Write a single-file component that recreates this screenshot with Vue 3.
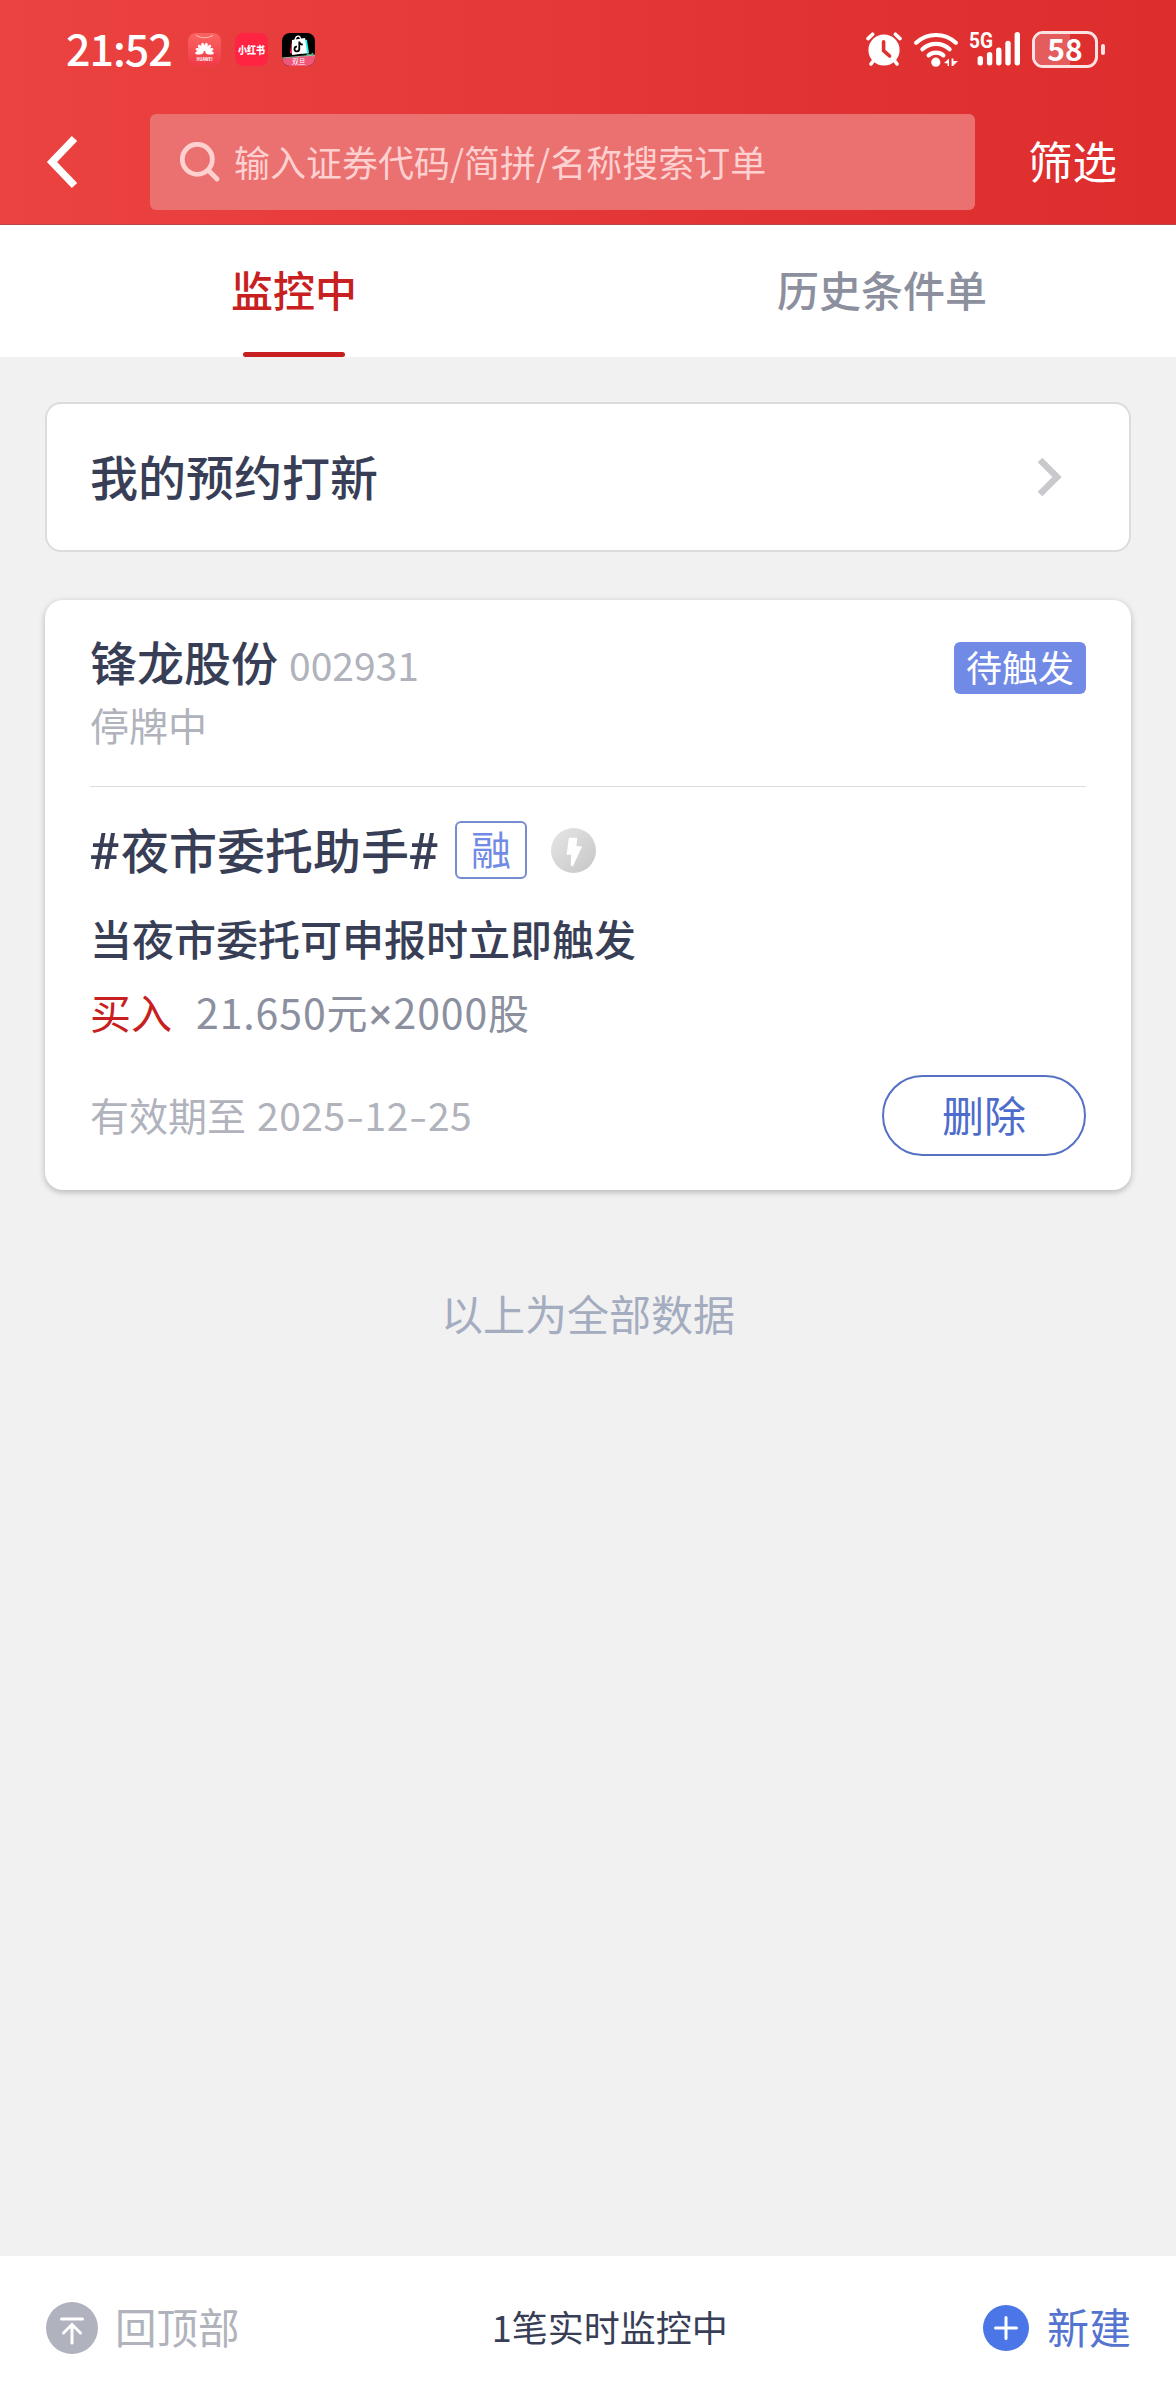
<template>
  <div class="page">
    <header class="header">
      <div class="status-bar">
        <div class="status-left">
          <span class="time">21:52</span>
          <svg class="app-icon" viewBox="0 0 33 33">
            <defs>
              <linearGradient id="huawei" x1="0" y1="0" x2="0" y2="1">
                <stop offset="0" stop-color="#fb6462" />
                <stop offset="1" stop-color="#f03a48" />
              </linearGradient>
            </defs>
            <rect width="33" height="33" rx="8" fill="url(#huawei)" />
            <path d="M8 2.5 Q16.5 7 25 2.5" fill="none" stroke="#ffc0b8" stroke-width="1" />
            <g fill="#fff">
              <ellipse
                v-for="angle in petals"
                :key="angle"
                cx="16.5"
                cy="13.8"
                rx="1.7"
                ry="4.2"
                :transform="`rotate(${angle} 16.5 19)`"
              />
            </g>
            <text x="8.5" y="28.2" class="huawei-text" textLength="16" lengthAdjust="spacingAndGlyphs">HUAWEI</text>
          </svg>
          <svg class="app-icon" viewBox="0 0 33 33">
            <rect width="33" height="33" rx="8" fill="#ff2442" />
            <text x="3" y="20.6" class="red-text" textLength="27" lengthAdjust="spacingAndGlyphs">小红书</text>
          </svg>
          <svg class="app-icon" viewBox="0 0 33 33">
            <defs>
              <clipPath id="shop">
                <rect width="33" height="33" rx="8" />
              </clipPath>
            </defs>
            <g clip-path="url(#shop)">
              <rect width="33" height="33" fill="#000" />
              <path d="M10 7 L8 20 L13 22 Z" fill="#fe2c55" />
              <path d="M21 6 L25 7 L27 20 L20 21 Z" fill="#25f4ee" />
              <path d="M10 7 L23 5 L25 20 L10 22 Z" fill="#fff" />
              <path d="M13 7 Q14 2 17.5 3.5 L19 6" fill="none" stroke="#fff" stroke-width="1.4" />
              <path
                d="M17.3 8.5 V16.2 A2.4 2.4 0 1 1 15 13.6 M17.3 9 Q18 11.5 20.8 11.6"
                fill="none"
                stroke="#000"
                stroke-width="1.8"
              />
              <path d="M0 25.5 L33 22 V33 H0 Z" fill="#f0557a" />
              <path d="M0 25 L33 22" stroke="#b9e0c5" stroke-width="0.8" />
              <path d="M25 20 l3 2 l3 -2 v3 l-3 -1 l-3 1 z" fill="#2b8a5c" stroke="#8fd6ad" stroke-width="0.6" />
            </g>
            <text x="10" y="31.4" class="shop-text" textLength="13.5" lengthAdjust="spacingAndGlyphs">双旦</text>
          </svg>
        </div>
        <div class="status-right">
          <svg class="alarm" viewBox="0 0 36 34">
            <g fill="none" stroke="#fff" stroke-linecap="round">
              <path d="M2 6.6 L6.6 2.2 M34 6.6 L29.4 2.2" stroke-width="3.6" />
              <path d="M8 28 L5 32 M28 28 L31 32" stroke-width="3.6" />
            </g>
            <circle cx="18" cy="18" r="15.6" fill="#fff" />
            <path
              d="M17.6 9.8 V18.6 L23.6 24"
              fill="none"
              stroke="#e03131"
              stroke-width="3.6"
              stroke-linecap="round"
            />
          </svg>
          <svg class="wifi" viewBox="0 0 44 35">
            <g fill="none" stroke="#fff" stroke-width="4.2" stroke-linecap="round">
              <path d="M2.2 10.8 A29 29 0 0 1 41.8 10.8" />
              <path d="M8.4 17.2 A20 20 0 0 1 35.6 17.2" />
              <path d="M14.6 23.4 A11.5 11.5 0 0 1 29.4 23.4" />
            </g>
            <circle cx="21.8" cy="30.2" r="4.6" fill="#fff" />
            <path d="M30 31 L35 26.5 V34 H33.6 V31.6 Z M37.6 26.5 V34 H39.4 V33.5 L44 29 H39.4 V26.5 Z" fill="#fff" />
          </svg>
          <svg class="signal" viewBox="0 0 51 36">
            <text x="-1" y="17.4" class="net-text" textLength="24" lengthAdjust="spacingAndGlyphs">5G</text>
            <g stroke="#fff" stroke-width="5.4" stroke-linecap="round">
              <path d="M10.3 27.6 V31.8" />
              <path d="M19.6 23.6 V31.8" />
              <path d="M28.8 19.2 V31.8" />
              <path d="M38 12.4 V31.8" />
              <path d="M47.3 3.8 V31.8" />
            </g>
          </svg>
          <div class="battery">
            <div class="battery-body">
              <div class="battery-fill" :style="{ width: battery + '%' }"></div>
              <span class="battery-text">{{ battery }}</span>
            </div>
            <div class="battery-tip"></div>
          </div>
        </div>
      </div>

      <div class="nav">
        <svg class="back" viewBox="0 0 32 54">
          <path d="M28.5 3.5 L6 27 L28.5 50.5" fill="none" stroke="#fff" stroke-width="7.4" />
        </svg>
        <div class="search">
          <svg class="search-icon" viewBox="0 0 40 40">
            <circle cx="17.3" cy="17.3" r="15" />
            <path d="M28.5 28.5 L37 37" />
          </svg>
          <span class="placeholder">输入证券代码/简拼/名称搜索订单</span>
        </div>
        <span class="filter">筛选</span>
      </div>
    </header>

    <div class="tabs">
      <div
        v-for="tab in tabs"
        :key="tab"
        class="tab"
        :class="{ active: tab === activeTab }"
        @click="activeTab = tab"
      >
        {{ tab }}
      </div>
    </div>

    <main class="content">
      <div class="entry">
        <span class="entry-text">我的预约打新</span>
        <svg class="chevron" viewBox="0 0 25 40">
          <path d="M3 3 L20 20 L3 37" fill="none" stroke="#c8c8cd" stroke-width="6.6" />
        </svg>
      </div>

      <div class="card">
        <div class="card-head">
          <div class="stock">
            <span class="stock-name">{{ order.name }}</span>
            <span class="stock-code">{{ order.code }}</span>
          </div>
          <span class="badge">待触发</span>
        </div>
        <div class="stock-status">停牌中</div>
        <div class="divider"></div>
        <div class="strategy">
          <span class="hash">#</span>
          <span class="strategy-name">夜市委托助手</span>
          <span class="hash">#</span>
          <span class="margin-tag">融</span>
          <svg class="bolt" viewBox="0 0 45 45">
            <defs>
              <linearGradient id="bolt" x1="0" y1="0" x2="1" y2="1">
                <stop offset="0" stop-color="#e6e6e6" />
                <stop offset="1" stop-color="#c6c6c6" />
              </linearGradient>
            </defs>
            <circle cx="22.5" cy="22.5" r="22.5" fill="url(#bolt)" />
            <path
              d="M18.5 10.5 H25.5 L24.5 19 H30 L21.5 37.5 L20.5 37 L21 26 H16.5 Z"
              fill="#fff"
              stroke="#fff"
              stroke-width="1.6"
              stroke-linejoin="round"
            />
          </svg>
        </div>
        <div class="condition">当夜市委托可申报时立即触发</div>
        <div class="trade">
          <span class="side">买入</span>
          <span class="amount">{{ order.price }}元<span class="times">×</span>{{ order.count }}股</span>
        </div>
        <div class="card-foot">
          <div class="expire">
            <span>有效期至</span>
            <span class="date">
              <template v-for="(part, i) in order.expire.split('-')" :key="i">
                <span v-if="i > 0" class="dash">-</span>
                <span>{{ part }}</span>
              </template>
            </span>
          </div>
          <button class="delete">删除</button>
        </div>
      </div>

      <p class="end">以上为全部数据</p>
    </main>

    <footer class="footer">
      <div class="to-top">
        <svg class="top-icon" viewBox="0 0 52 52">
          <circle cx="26" cy="26" r="26" fill="#b0b2be" />
          <path
            d="M15.5 17 H36.5 M26 41 V23 M17.5 31 L26 22.5 L34.5 31"
            fill="none"
            stroke="#fff"
            stroke-width="3"
            stroke-linecap="round"
          />
        </svg>
        <span class="footer-text">回顶部</span>
      </div>
      <span class="count footer-text">1笔实时监控中</span>
      <div class="create">
        <svg class="plus-icon" viewBox="0 0 46 46">
          <circle cx="23" cy="23" r="23" fill="#4a76e8" />
          <path d="M12.5 23 H33.5 M23 12.5 V33.5" stroke="#fff" stroke-width="3" stroke-linecap="round" />
        </svg>
        <span class="footer-text">新建</span>
      </div>
    </footer>
  </div>
</template>

<script setup>
import { ref } from "vue";

const battery = 58;
const petals = [-98, -70, -42, -14, 14, 42, 70, 98];

const tabs = ["监控中", "历史条件单"];
const activeTab = ref("监控中");

const order = {
  name: "锋龙股份",
  code: "002931",
  price: "21.650",
  count: 2000,
  expire: "2025-12-25",
};
</script>

<style>
body {
  background-color: #f1f1f1;
}
</style>

<style scoped>
.page {
  display: flex;
  flex-direction: column;
  width: 1176px;
  height: 2400px;
  background-color: #f1f1f1;
  color: #383e56;
  font-family: "Noto Sans CJK SC", sans-serif;
  overflow: hidden;
}

.header {
  box-sizing: border-box;
  height: 225px;
  background: linear-gradient(90deg, #eb4341, #e23334 65%, #dd2d2d);
  border-bottom: 1px solid #b34848;
  color: white;
}

.status-bar {
  display: flex;
  justify-content: space-between;
  align-items: center;
  box-sizing: border-box;
  height: 98px;
  padding: 0 71px 0 66px;
}

.status-left,
.status-right {
  display: flex;
  align-items: center;
}

.time {
  width: 122px;
  padding-bottom: 4px;
  font-size: 43px;
  font-weight: 500;
  letter-spacing: -1px;
  line-height: 60px;
  white-space: nowrap;
}

.app-icon {
  width: 33px;
  height: 33px;
  margin-right: 14px;
  overflow: visible;
}

.huawei-text {
  font-size: 4.2px;
  font-weight: bold;
  fill: #fff;
}

.red-text {
  font-size: 10.4px;
  font-weight: 900;
  fill: #fff;
}

.shop-text {
  font-size: 7px;
  fill: #fff;
}

.alarm {
  width: 36px;
  height: 34px;
  margin-right: 12px;
}

.wifi {
  width: 44px;
  height: 35px;
  margin-right: 12px;
}

.signal {
  width: 51px;
  height: 36px;
  margin-right: 11px;
  overflow: visible;
}

.net-text {
  font-family: "Roboto", sans-serif;
  font-size: 21.5px;
  font-weight: 700;
  fill: #fff;
}

.battery {
  display: flex;
  align-items: center;
  gap: 3px;
}

.battery-body {
  position: relative;
  box-sizing: border-box;
  width: 66px;
  height: 37px;
  border: 3px solid #fbe3e3;
  border-radius: 11px;
}

.battery-fill {
  height: 100%;
  border-radius: 8px 0 0 8px;
  background-color: #e45c5c;
}

.battery-text {
  position: absolute;
  top: -8px;
  left: 0;
  right: 0;
  font-size: 30px;
  font-weight: 700;
  line-height: 44px;
  text-align: center;
}

.battery-tip {
  width: 4px;
  height: 11px;
  border-radius: 2px;
  background-color: #fbe3e3;
}

.nav {
  display: flex;
  align-items: center;
  padding: 16px 0 0 46px;
}

.back {
  width: 32px;
  height: 54px;
  margin-right: 72px;
}

.search {
  display: flex;
  align-items: center;
  box-sizing: border-box;
  width: 825px;
  height: 96px;
  padding-left: 30px;
  border-radius: 6px;
  background-color: #ea7170;
  color: #ffd0d0;
  font-size: 36px;
  white-space: nowrap;
}

.search-icon {
  width: 40px;
  height: 40px;
  margin-right: 14px;
  fill: none;
  stroke: #ffd0d0;
  stroke-width: 4.8;
  stroke-linecap: round;
}

.placeholder {
  padding-bottom: 3px;
}

.filter {
  margin-left: 53px;
  padding-bottom: 5px;
  font-size: 44.5px;
  line-height: 60px;
}

.tabs {
  display: flex;
  height: 132px;
  background-color: white;
}

.tab {
  display: flex;
  flex: 1;
  flex-direction: column;
  align-items: center;
  justify-content: space-between;
  padding-top: 34px;
  color: #8b8f9e;
  font-size: 42px;
  font-weight: 500;
  line-height: 60px;
}

.tab.active {
  color: #c82020;
}

.tab.active::after {
  content: "";
  width: 102px;
  height: 5px;
  border-radius: 3px;
  background-color: #c82020;
}

.content {
  flex: 1;
  padding: 45px 45px 0;
}

.entry {
  display: flex;
  align-items: center;
  justify-content: space-between;
  box-sizing: border-box;
  height: 150px;
  padding: 0 67px 0 43px;
  border: 2px solid #dcdcdc;
  border-radius: 16px;
  background-color: white;
  font-size: 48px;
  font-weight: 500;
}

.entry-text {
  padding-bottom: 5px;
}

.chevron {
  width: 25px;
  height: 40px;
}

.card {
  box-sizing: border-box;
  height: 590px;
  margin-top: 48px;
  padding: 0 45px;
  border-radius: 18px;
  background-color: white;
  box-shadow: 0 2px 6px rgba(0, 0, 0, 0.25);
}

.card-head {
  display: flex;
  justify-content: space-between;
  align-items: flex-start;
  box-sizing: border-box;
  height: 95px;
  padding-top: 26px;
}

.stock {
  display: flex;
  align-items: baseline;
  gap: 11px;
  line-height: 70px;
}

.stock-name {
  font-size: 47px;
  font-weight: 500;
}

.stock-code {
  color: #b0b2bc;
  font-size: 39px;
}

.badge {
  width: 132px;
  height: 52px;
  margin-top: 16px;
  border-radius: 6px;
  background-color: #718ae6;
  color: white;
  font-size: 36px;
  line-height: 49px;
  text-align: center;
}

.stock-status {
  color: #b0b2bc;
  font-size: 39px;
  line-height: 58px;
}

.divider {
  height: 1px;
  margin-top: 33px;
  background-color: #dedede;
}

.strategy {
  display: flex;
  align-items: center;
  margin-top: 28px;
  font-size: 48px;
  font-weight: 500;
  line-height: 66px;
}

.strategy-name {
  padding-bottom: 4px;
}

.hash {
  width: 31px;
  padding-top: 4px;
  font-family: "Roboto", sans-serif;
  font-size: 50px;
  text-indent: -1px;
}

.margin-tag {
  box-sizing: border-box;
  width: 72px;
  height: 58px;
  margin-left: 15px;
  border: 2px solid #768cd0;
  border-radius: 6px;
  color: #718ae6;
  font-size: 40px;
  font-weight: 400;
  line-height: 51px;
  text-align: center;
}

.bolt {
  width: 45px;
  height: 45px;
  margin-left: 24px;
}

.condition {
  margin-top: 23px;
  font-size: 42px;
  font-weight: 500;
  line-height: 60px;
}

.trade {
  display: flex;
  gap: 24px;
  margin-top: 13px;
  font-size: 41px;
  line-height: 60px;
}

.side {
  color: #c82020;
}

.amount {
  color: #8b8f9e;
  letter-spacing: 0.9px;
}

.times {
  display: inline-block;
  width: 25px;
  font-family: "Roboto", sans-serif;
  font-size: 43px;
  line-height: 50px;
  text-align: center;
}

.card-foot {
  display: flex;
  justify-content: space-between;
  align-items: center;
  margin-top: 34px;
}

.expire {
  display: flex;
  gap: 11px;
  padding-bottom: 4px;
  color: #b0b2bc;
  font-size: 39px;
}

.date {
  display: flex;
  letter-spacing: 0.5px;
}

.dash {
  width: 19px;
  text-align: center;
  transform: scaleX(1.35);
}

.delete {
  width: 204px;
  height: 81px;
  padding: 0 0 4px;
  border: 2px solid #5670c4;
  border-radius: 41px;
  background-color: white;
  color: #4e6ccc;
  font-family: inherit;
  font-size: 42px;
}

.end {
  margin: 93px 0 0;
  color: #a4acbf;
  font-size: 42px;
  line-height: 60px;
  text-align: center;
}

.footer {
  display: flex;
  align-items: center;
  justify-content: space-between;
  box-sizing: border-box;
  height: 144px;
  padding: 0 45px 0 46px;
  background-color: white;
  font-size: 41.5px;
}

.footer-text {
  padding-bottom: 4px;
  line-height: 60px;
}

.to-top,
.create {
  display: flex;
  align-items: center;
}

.to-top {
  color: #b0b2bc;
}

.top-icon {
  width: 52px;
  height: 52px;
  margin-right: 17px;
}

.count {
  margin-right: 3px;
  font-size: 36px;
}

.create {
  color: #5474cf;
  font-size: 42px;
}

.plus-icon {
  width: 46px;
  height: 46px;
  margin-right: 18px;
}
</style>
